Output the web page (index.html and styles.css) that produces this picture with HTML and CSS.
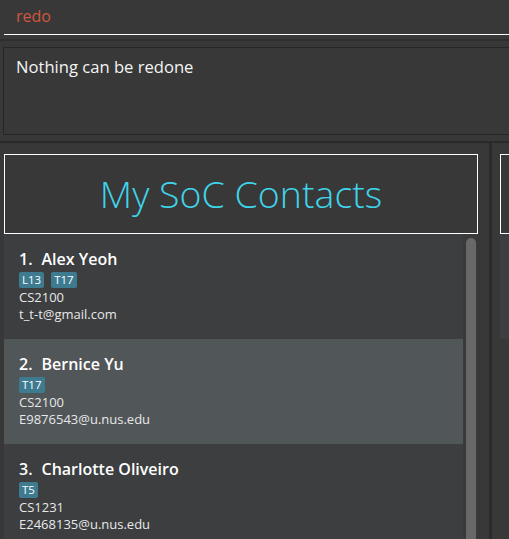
FILE: index.html
```
<!DOCTYPE html>
<html>
<head>
<meta charset="utf-8">
<link rel="stylesheet" href="styles.css">
</head>
<body>
<div class="app">
  <div class="command">
    <div class="command-input">redo</div>
  </div>
  <div class="command-sep"></div>
  <div class="result">
    <div class="result-box">Nothing can be redone</div>
  </div>
  <div class="hdivider"></div>
  <div class="split">
    <div class="panel panel-left">
      <div class="title-box">My SoC Contacts</div>
      <div class="list">
        <div class="cards">
          <div class="card even">
            <div class="name-row"><span>1.</span><span>Alex Yeoh</span></div>
            <div class="tags"><span class="tag">L13</span><span class="tag">T17</span></div>
            <div class="detail">CS2100</div>
            <div class="detail">t_t-t@gmail.com</div>
          </div>
          <div class="card odd">
            <div class="name-row"><span>2.</span><span>Bernice Yu</span></div>
            <div class="tags"><span class="tag">T17</span></div>
            <div class="detail">CS2100</div>
            <div class="detail">E9876543@u.nus.edu</div>
          </div>
          <div class="card even">
            <div class="name-row"><span>3.</span><span>Charlotte Oliveiro</span></div>
            <div class="tags"><span class="tag">T5</span></div>
            <div class="detail">CS1231</div>
            <div class="detail">E2468135@u.nus.edu</div>
          </div>
        </div>
        <div class="scroll"><div class="thumb"></div></div>
      </div>
    </div>
    <div class="vdivider"></div>
    <div class="panel panel-right">
      <div class="title-box"></div>
      <div class="right-card"></div>
    </div>
  </div>
</div>
</body>
</html>
```
FILE: styles.css
```
html, body {
  margin: 0;
  padding: 0;
  background: #383838;
  font-family: "Open Sans", "DejaVu Sans", sans-serif;
  overflow: hidden;
}
.app {
  width: 509px;
  height: 539px;
  display: flex;
  flex-direction: column;
  overflow: hidden;
}
.command {
  height: 39px;
  padding-left: 4px;
  flex: none;
}
.command-input {
  box-sizing: border-box;
  height: 35px;
  border-bottom: 1px solid #ffffff;
  padding-left: 12px;
  padding-top: 5px;
  color: #d0573f;
  font-size: 16px;
  line-height: 22px;
}
.command-sep {
  height: 2px;
  background: #2e2e2e;
  flex: none;
}
.result {
  flex: none;
  padding: 6px 0 6px 3px;
}
.result-box {
  box-sizing: border-box;
  height: 88px;
  border: 1px solid #262626;
  border-right: none;
  padding: 7px 0 0 12px;
  color: #f4f4f4;
  font-size: 16.6px;
  line-height: 24px;
}
.hdivider {
  height: 2px;
  background: #2a2a2a;
  flex: none;
}
.split {
  flex: 1;
  display: flex;
  min-height: 0;
}
.panel {
  padding-top: 11px;
  display: flex;
  flex-direction: column;
  box-sizing: border-box;
}
.panel-left {
  width: 489px;
  padding-left: 4px;
  padding-right: 11px;
  flex: none;
}
.vdivider {
  width: 3px;
  background: #2a2a2a;
  flex: none;
}
.panel-right {
  flex: 1;
  padding-left: 8px;
}
.title-box {
  height: 80px;
  box-sizing: border-box;
  border: 1px solid #ffffff;
  display: flex;
  align-items: center;
  justify-content: center;
  color: #3fd4ea;
  font-size: 37.5px;
  font-weight: 300;
  line-height: 48px;
  flex: none;
}
.panel-right .title-box {
  border-right: none;
}
.right-card {
  height: 105px;
  background: #3c3e3f;
}
.list {
  display: flex;
  flex: 1;
  min-height: 0;
}
.cards {
  width: 459px;
  flex: none;
  display: flex;
  flex-direction: column;
}
.card {
  height: 105px;
  box-sizing: border-box;
  padding: 14px 0 0 15px;
  flex: none;
}
.even { background: #3c3e3f; }
.odd { background: #515658; }
.name-row {
  display: flex;
  gap: 9px;
  color: #ffffff;
  font-size: 16px;
  font-weight: 600;
  line-height: 22px;
}
.tags {
  display: flex;
  gap: 7px;
  margin-top: 2px;
  height: 16px;
}
.tag {
  background: #3e7b91;
  color: #ffffff;
  font-size: 11.5px;
  line-height: 14px;
  padding: 1px 3px;
  border-radius: 2px;
}
.detail {
  color: #e8e8e8;
  font-size: 13px;
  line-height: 17px;
}
.tags + .detail {
  margin-top: 1px;
}
.scroll {
  width: 14px;
  flex: none;
  background: #3a3a3a;
  padding: 4px 1px 0 3px;
  box-sizing: border-box;
}
.thumb {
  height: 400px;
  background: #686868;
  border-radius: 5px;
}
```
